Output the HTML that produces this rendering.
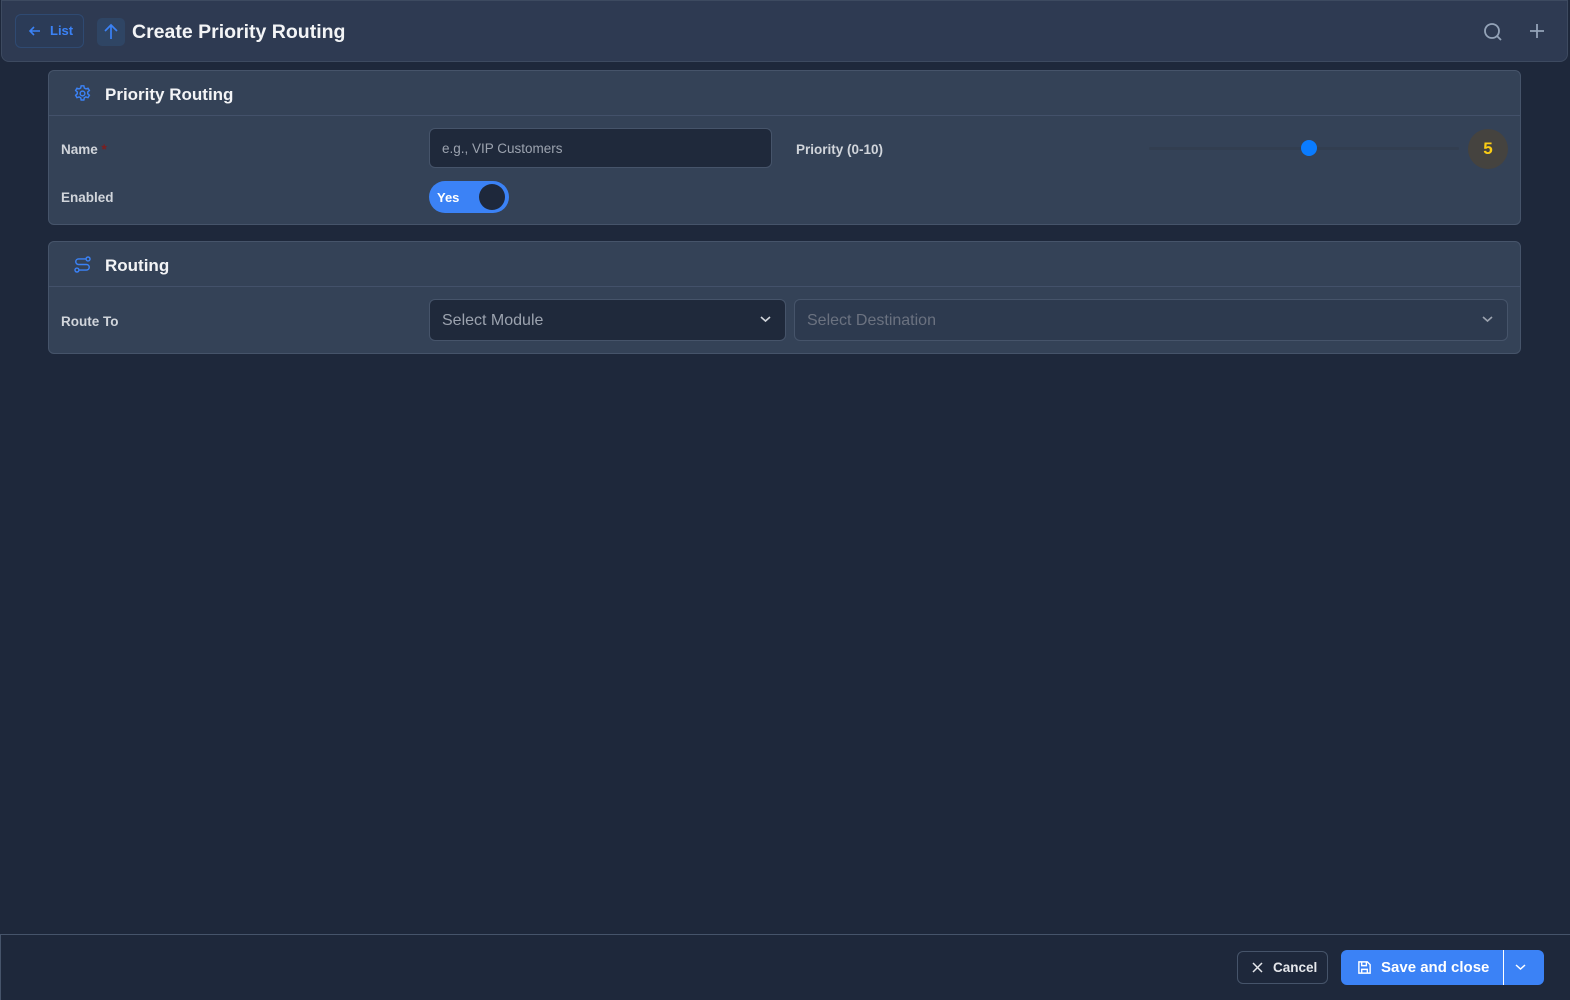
<!DOCTYPE html>
<html><head><style>
*{box-sizing:border-box;margin:0;padding:0}
body{width:1570px;height:1000px;background:#1e283b;font-family:"Liberation Sans",sans-serif;position:relative;overflow:hidden;color:#e5e7eb}
.top{position:absolute;left:1px;top:0;width:1567px;height:62px;background:#2e3a52;border:1px solid #3d4a60;border-radius:0 0 8px 8px}
.list{position:absolute;left:13px;top:13px;width:69px;height:34px;border:1px solid #2f4a72;border-radius:6px;background:#2b3b57;color:#3b82f6;font-size:13px;font-weight:bold;line-height:32px;padding-left:34px}
.up{position:absolute;left:95px;top:17px;width:28px;height:28px;background:#2f4564;border-radius:5px}
.title{position:absolute;left:130px;top:20px;font-size:19.5px;font-weight:bold;color:#f3f4f6}
.card{position:absolute;left:48px;width:1473px;background:#344257;border:1px solid #46546a;border-radius:6px}
.hd{height:45px;border-bottom:1px solid #43516a;position:relative}
.hd span{position:absolute;left:56px;top:14px;font-size:17px;font-weight:bold;color:#f3f4f6}
.lbl{position:absolute;left:12px;font-size:13.5px;font-weight:bold;color:#d1d5db}
.inp{position:absolute;border:1px solid #46546a;border-radius:6px;background:#1f293b}
</style></head><body>
<div class="top">
<div class="list"><svg style="position:absolute;left:12px;top:9px" width="14" height="14" viewBox="0 0 14 14" fill="none" stroke="#3b82f6" stroke-width="1.6"><path d="M12 7H2M6 3L2 7l4 4"/></svg>List</div>
<div class="up"><svg style="position:absolute;left:6px;top:5px" width="16" height="18" viewBox="0 0 16 18" fill="none" stroke="#3b82f6" stroke-width="1.7"><path d="M8 16V2M2 8l6-6 6 6"/></svg></div>
<div class="title">Create Priority Routing</div>
<svg style="position:absolute;left:1481px;top:21px" width="20" height="20" viewBox="0 0 20 20" fill="none" stroke="#94a3b8" stroke-width="1.8"><circle cx="9" cy="9" r="7"/><path d="M14 14l4 4"/></svg>
<svg style="position:absolute;left:1527px;top:22px" width="16" height="16" viewBox="0 0 16 16" stroke="#94a3b8" stroke-width="1.8"><path d="M8 1v14M1 8h14"/></svg>
</div>

<div class="card" style="top:70px;height:155px">
<div class="hd"><svg style="position:absolute;left:24px;top:13px" width="19" height="19" viewBox="0 0 24 24" fill="none" stroke="#3b82f6" stroke-width="1.8"><path d="M10.3 2.3h3.4l.6 2.8 2 1.1 2.7-.9 1.7 2.9-2.1 1.9v2.3l2.1 1.9-1.7 2.9-2.7-.9-2 1.1-.6 2.8h-3.4l-.6-2.8-2-1.1-2.7.9-1.7-2.9 2.1-1.9v-2.3L3.3 8.2 5 5.3l2.7.9 2-1.1z"/><circle cx="12" cy="12" r="3"/></svg><span>Priority Routing</span></div>
<div class="lbl" style="top:71px">Name <span style="color:#7f1d1d">*</span></div>
<div class="inp" style="left:380px;top:57px;width:343px;height:40px;font-size:13.5px;color:#9ca3af;padding:12px 12px">e.g., VIP Customers</div>
<div class="lbl" style="left:747px;top:71px">Priority (0-10)</div>
<div style="position:absolute;left:1100px;top:76px;width:310px;height:3px;background:#323e50;border-radius:2px"></div>
<div style="position:absolute;left:1252px;top:69px;width:16px;height:16px;border-radius:50%;background:#0a7cff"></div>
<div style="position:absolute;left:1419px;top:58px;width:40px;height:40px;border-radius:50%;background:#45433f;color:#facc15;font-weight:bold;font-size:17px;text-align:center;line-height:40px">5</div>
<div class="lbl" style="top:119px">Enabled</div>
<div style="position:absolute;left:380px;top:110px;width:80px;height:32px;border-radius:16px;background:#3b82f6"><span style="position:absolute;left:8px;top:9px;font-size:13px;font-weight:bold;color:#fff">Yes</span><div style="position:absolute;left:50px;top:3px;width:26px;height:26px;border-radius:50%;background:#1e283b"></div></div>
</div>

<div class="card" style="top:241px;height:113px">
<div class="hd"><svg style="position:absolute;left:24px;top:13px" width="19" height="19" viewBox="0 0 24 24" fill="none" stroke="#3b82f6" stroke-width="1.8"><circle cx="19" cy="5" r="2.5"/><circle cx="5" cy="19" r="2.5"/><path d="M16.5 5H7a3.5 3.5 0 000 7h10a3.5 3.5 0 010 7H7.5"/></svg><span>Routing</span></div>
<div class="lbl" style="top:72px">Route To</div>
<div class="inp" style="left:380px;top:57px;width:357px;height:42px;font-size:16px;color:#9ca3af;padding:12px 12px">Select Module<svg style="position:absolute;right:14px;top:15px" width="11" height="8" viewBox="0 0 11 8" fill="none" stroke="#d1d5db" stroke-width="1.6"><path d="M1 2l4.5 4L10 2"/></svg></div>
<div class="inp" style="left:745px;top:57px;width:714px;height:42px;font-size:16px;color:#6b7280;padding:12px 12px;background:#2d3a4f">Select Destination<svg style="position:absolute;right:14px;top:15px" width="11" height="8" viewBox="0 0 11 8" fill="none" stroke="#9ca3af" stroke-width="1.6"><path d="M1 2l4.5 4L10 2"/></svg></div>
</div>

<div style="position:absolute;left:0;top:934px;width:1570px;height:66px;border-top:1px solid #46546a;border-left:1px solid #46546a;background:#1e283b"></div>
<div style="position:absolute;left:1237px;top:951px;width:91px;height:33px;border:1px solid #46546a;border-radius:6px;font-size:13.5px;font-weight:bold;color:#e5e7eb;line-height:31px;padding-left:35px"><svg style="position:absolute;left:14px;top:10px" width="11" height="11" viewBox="0 0 11 11" stroke="#e5e7eb" stroke-width="1.5"><path d="M1 1l9 9M10 1l-9 9"/></svg>Cancel</div>
<div style="position:absolute;left:1341px;top:950px;width:203px;height:35px;border-radius:6px;background:#3b82f6;color:#fff;font-size:15px;font-weight:bold;line-height:36px;padding-left:40px">Save and close
<svg style="position:absolute;left:16px;top:10px" width="15" height="15" viewBox="0 0 16 16" fill="none" stroke="#fff" stroke-width="1.5"><path d="M2 2h9l3 3v9H2z M5 2v4h5V2 M5 14V10h6v4"/></svg>
<div style="position:absolute;left:162px;top:0;width:1px;height:35px;background:#fff"></div>
<svg style="position:absolute;left:174px;top:14px" width="11" height="7" viewBox="0 0 11 7" fill="none" stroke="#fff" stroke-width="1.5"><path d="M1 1l4.5 4L10 1"/></svg></div>
</body></html>
